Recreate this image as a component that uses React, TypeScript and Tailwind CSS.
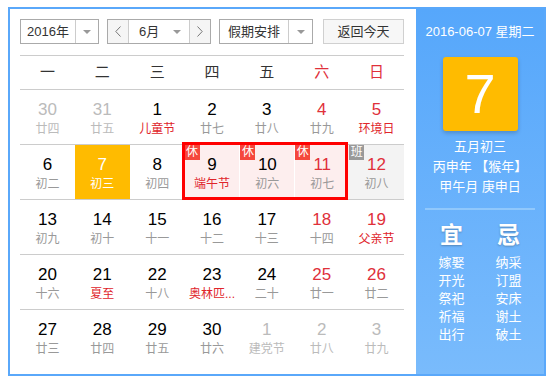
type Cell = {
  d: number
  l: string
  other?: boolean
  red?: boolean
  fest?: boolean
  today?: boolean
  rest?: boolean
  work?: boolean
}

const rows: Cell[][] = [
  [
    { d: 30, l: '廿四', other: true },
    { d: 31, l: '廿五', other: true },
    { d: 1, l: '儿童节', fest: true },
    { d: 2, l: '廿七' },
    { d: 3, l: '廿八' },
    { d: 4, l: '廿九', red: true },
    { d: 5, l: '环境日', red: true, fest: true },
  ],
  [
    { d: 6, l: '初二' },
    { d: 7, l: '初三', today: true },
    { d: 8, l: '初四' },
    { d: 9, l: '端午节', fest: true, rest: true },
    { d: 10, l: '初六', rest: true },
    { d: 11, l: '初七', red: true, rest: true },
    { d: 12, l: '初八', red: true, work: true },
  ],
  [
    { d: 13, l: '初九' },
    { d: 14, l: '初十' },
    { d: 15, l: '十一' },
    { d: 16, l: '十二' },
    { d: 17, l: '十三' },
    { d: 18, l: '十四', red: true },
    { d: 19, l: '父亲节', red: true, fest: true },
  ],
  [
    { d: 20, l: '十六' },
    { d: 21, l: '夏至', fest: true },
    { d: 22, l: '十八' },
    { d: 23, l: '奥林匹...', fest: true },
    { d: 24, l: '二十' },
    { d: 25, l: '廿一', red: true },
    { d: 26, l: '廿二', red: true },
  ],
  [
    { d: 27, l: '廿三' },
    { d: 28, l: '廿四' },
    { d: 29, l: '廿五' },
    { d: 30, l: '廿六' },
    { d: 1, l: '建党节', other: true },
    { d: 2, l: '廿八', other: true },
    { d: 3, l: '廿九', other: true },
  ],
]

const weekdays = ['一', '二', '三', '四', '五', '六', '日']
const yi = ['嫁娶', '开光', '祭祀', '祈福', '出行']
const ji = ['纳采', '订盟', '安床', '谢土', '破土']

function Caret() {
  return <span className="w-0 h-0 border-x-[4px] border-x-transparent border-t-[4px] border-t-[#999]" />
}

function Chevron({ dir }: { dir: 'left' | 'right' }) {
  return (
    <svg width="6" height="11" viewBox="0 0 6 11" fill="none" stroke="#777" strokeWidth="1">
      {dir === 'left' ? <path d="M5.5 0.5 L0.8 5.5 L5.5 10.5" /> : <path d="M0.5 0.5 L5.2 5.5 L0.5 10.5" />}
    </svg>
  )
}

function DayCell({ c, first }: { c: Cell; first: boolean }) {
  let bg = ''
  if (c.today) bg = 'bg-[#ffbb00]'
  else if (c.rest) bg = 'bg-[#fdeeee]'
  else if (c.work) bg = 'bg-[#f3f3f3]'

  let num = 'text-black'
  if (c.today) num = 'text-white'
  else if (c.other) num = 'text-[#bbb]'
  else if (c.red) num = 'text-[#e0303a]'

  let lunar = 'text-[#999]'
  if (c.today) lunar = 'text-white'
  else if (c.other) lunar = 'text-[#bbb]'
  else if (c.fest) lunar = 'text-[#e0252b]'

  return (
    <div className={`relative flex flex-col items-center pt-[10px] ${bg} ${c.rest && !first ? 'border-l border-white' : ''}`}>
      {c.rest && (
        <span className="absolute left-0 top-0 w-[15px] h-[15px] bg-[#f5473c] text-white text-[12px] leading-[15px] text-center">休</span>
      )}
      {c.work && (
        <span className="absolute left-0 top-0 w-[15px] h-[15px] bg-[#999] text-white text-[12px] leading-[15px] text-center">班</span>
      )}
      <span className={`text-[17px] leading-[20px] ${num}`}>{c.d}</span>
      <span className={`text-[12px] leading-[18px] whitespace-nowrap ${lunar}`}>{c.l}</span>
    </div>
  )
}

export default function App() {
  return (
    <div className="pl-[8px] pt-[7px] font-['Liberation_Sans','Noto_Sans_CJK_SC',sans-serif]">
      <div className="flex w-[538px] h-[369px] border-2 border-[#5aa8fa] bg-white">
        {/* left: calendar */}
        <div className="w-[406px] pl-[10px] pr-[12px] pt-[10px]">
          <div className="flex items-center h-[25px] text-[13px] text-[#333] mb-[11px]">
            <div className="flex w-[79px] h-full border border-[#aaa]">
              <span className="flex-1 flex items-center justify-center">2016年</span>
              <span className="w-[23px] flex items-center justify-center border-l border-[#ccc]"><Caret /></span>
            </div>
            <div className="flex w-[104px] h-full border border-[#aaa] ml-[8px]">
              <span className="w-[21px] flex items-center justify-center bg-[#f5f5f5] border-r border-[#ccc]">
                <Chevron dir="left" />
              </span>
              <span className="flex-1 flex items-center justify-between pl-[10px] pr-[8px]">
                6月
                <Caret />
              </span>
              <span className="w-[21px] flex items-center justify-center bg-[#f5f5f5] border-l border-[#ccc]">
                <Chevron dir="right" />
              </span>
            </div>
            <div className="flex w-[94px] h-full border border-[#aaa] ml-[8px]">
              <span className="flex-1 flex items-center justify-center">假期安排</span>
              <span className="w-[24px] flex items-center justify-center border-l border-[#ccc]"><Caret /></span>
            </div>
            <button className="w-[81px] h-full ml-[10px] border border-[#d0d0d0] bg-[#f7f7f7] text-[#333]">返回今天</button>
          </div>

          <div className="grid grid-cols-7 h-[35px] border-t border-[#5aa8fa] border-b border-[#ccc] text-[15px]">
            {weekdays.map((w, i) => (
              <div key={w} className={`flex items-center justify-center ${i >= 5 ? 'text-[#e0303a]' : 'text-[#333]'}`}>
                {w}
              </div>
            ))}
          </div>

          {rows.map((row, ri) => (
            <div
              key={ri}
              className={`relative grid grid-cols-7 h-[55px] ${ri < rows.length - 1 ? 'border-b border-[#ccc]' : ''}`}
            >
              {row.map((c, ci) => (
                <DayCell key={ci} c={c} first={ci === 3} />
              ))}
              {ri === 1 && (
                <div className="absolute left-[162px] top-[-3px] w-[166px] h-[58px] border-[3px] border-[#ff0000] pointer-events-none" />
              )}
            </div>
          ))}
        </div>

        {/* right: today panel */}
        <div className="w-[128px] bg-gradient-to-b from-[#56a7fb] to-[#79bbfc] text-white flex flex-col items-center pt-[13px]">
          <div className="text-[13px] leading-[20px] whitespace-nowrap">2016-06-07 星期二</div>
          <div className="mt-[15px] w-[75px] h-[74px] bg-[#ffbb00] rounded-[3px] shadow-[0_2px_4px_rgba(0,0,0,0.2)] flex items-center justify-center text-[56px] leading-none">
            7
          </div>
          <div className="mt-[6px] text-[13px] leading-[20px] text-center whitespace-nowrap">
            <div>五月初三</div>
            <div>丙申年 【猴年】</div>
            <div>甲午月 庚申日</div>
          </div>
          <div className="mt-[11px] w-[110px] h-[2px] bg-[#90c8fc]" />
          <div className="mt-[11px] flex gap-[31px]">
            {[
              { t: '宜', items: yi },
              { t: '忌', items: ji },
            ].map((col) => (
              <div key={col.t} className="flex flex-col items-center">
                <div className="text-[23px] leading-[28px] font-bold [text-shadow:0_1px_2px_rgba(0,0,0,0.25)]">{col.t}</div>
                <div className="mt-[5px] text-[13px] leading-[18px]">
                  {col.items.map((it) => (
                    <div key={it}>{it}</div>
                  ))}
                </div>
              </div>
            ))}
          </div>
        </div>
      </div>
    </div>
  )
}
